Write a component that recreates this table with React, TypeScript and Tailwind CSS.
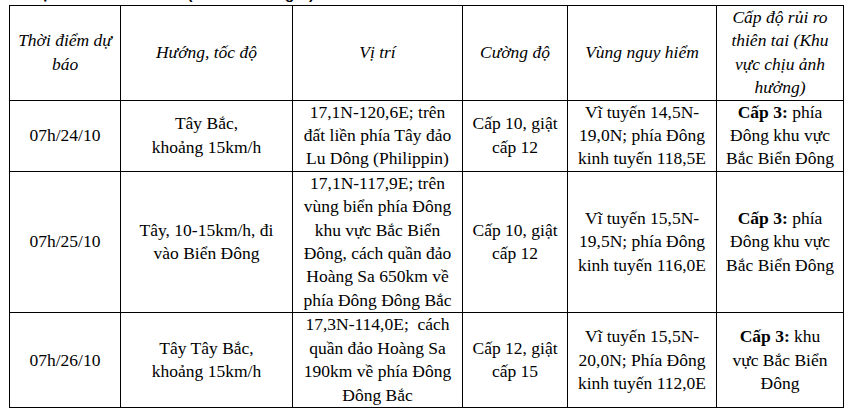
import React from 'react';

type Cell = React.ReactNode;

const header: string[][] = [
  ['Thời điểm dự', 'báo'],
  ['Hướng, tốc độ'],
  ['Vị trí'],
  ['Cường độ'],
  ['Vùng nguy hiểm'],
  ['Cấp độ rủi ro', 'thiên tai (Khu', 'vực chịu ảnh', 'hưởng)'],
];

const rows: { h: string; cells: Cell[] }[] = [
  {
    h: 'h-[71px]',
    cells: [
      '07h/24/10',
      <>Tây Bắc,<br />khoảng 15km/h</>,
      <>17,1N-120,6E; trên<br />đất liền phía Tây đảo<br />Lu Dông (Philippin)</>,
      <>Cấp 10, giật<br />cấp 12</>,
      <>Vĩ tuyến 14,5N-<br />19,0N; phía Đông<br />kinh tuyến 118,5E</>,
      <><b>Cấp 3:</b> phía<br />Đông khu vực<br />Bắc Biển Đông</>,
    ],
  },
  {
    h: 'h-[141px]',
    cells: [
      '07h/25/10',
      <>Tây, 10-15km/h, đi<br />vào Biển Đông</>,
      <>17,1N-117,9E; trên<br />vùng biển phía Đông<br />khu vực Bắc Biển<br />Đông, cách quần đảo<br />Hoàng Sa 650km về<br />phía Đông Đông Bắc</>,
      <>Cấp 10, giật<br />cấp 12</>,
      <>Vĩ tuyến 15,5N-<br />19,5N; phía Đông<br />kinh tuyến 116,0E</>,
      <><b>Cấp 3:</b> phía<br />Đông khu vực<br />Bắc Biển Đông</>,
    ],
  },
  {
    h: 'h-[95px]',
    cells: [
      '07h/26/10',
      <>Tây Tây Bắc,<br />khoảng 15km/h</>,
      <>17,3N-114,0E;&nbsp; cách<br />quần đảo Hoàng Sa<br />190km về phía Đông<br />Đông Bắc</>,
      <>Cấp 12, giật<br />cấp 15</>,
      <>Vĩ tuyến 15,5N-<br />20,0N; Phía Đông<br />kinh tuyến 112,0E</>,
      <><b>Cấp 3:</b> khu<br />vực Bắc Biển<br />Đông</>,
    ],
  },
];

const widths = ['w-[111px]', 'w-[172px]', 'w-[170px]', 'w-[105px]', 'w-[149px]', 'w-[127px]'];

export default function App() {
  return (
    <div className="w-[853px] h-[418px] overflow-hidden bg-white text-black font-['Liberation_Serif','Times_New_Roman',serif]">
      <div className="-mt-[15px] h-[20px] pl-[30px] text-[15px] leading-[18px] font-bold whitespace-nowrap font-['Liberation_Sans',Arial,sans-serif]">
        Dự báo diễn biến bão (từ 24 đến 72 giờ)
      </div>
      <table className="ml-[9px] table-fixed border-collapse text-[17.5px] leading-[23.4px] text-center font-['Liberation_Serif','Times_New_Roman',serif]">
        <colgroup>
          {widths.map((w, i) => (
            <col key={i} className={w} />
          ))}
        </colgroup>
        <thead>
          <tr className="h-[94px]">
            {header.map((lines, i) => (
              <th key={i} className="border border-black p-0 align-middle font-normal italic">
                {lines.map((l, j) => (
                  <React.Fragment key={j}>
                    {j > 0 && <br />}
                    {l}
                  </React.Fragment>
                ))}
              </th>
            ))}
          </tr>
        </thead>
        <tbody>
          {rows.map((r, i) => (
            <tr key={i} className={r.h}>
              {r.cells.map((c, j) => (
                <td key={j} className="border border-black p-0 align-middle whitespace-nowrap">
                  {c}
                </td>
              ))}
            </tr>
          ))}
        </tbody>
      </table>
    </div>
  );
}
